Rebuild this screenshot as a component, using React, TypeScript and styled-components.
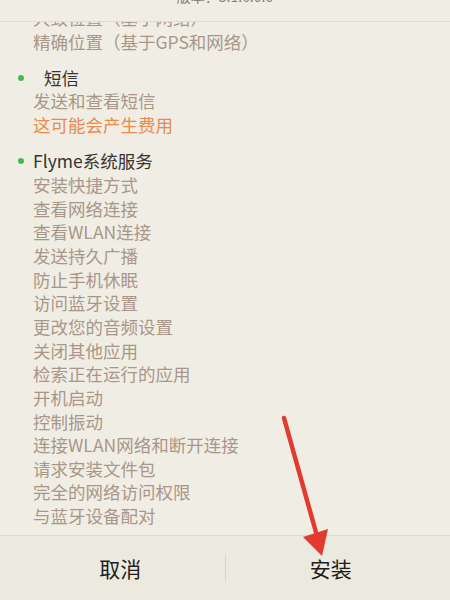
import React from 'react';
import styled, { createGlobalStyle } from 'styled-components';

const GlobalStyle = createGlobalStyle`
    html, body {
        margin: 0;
        padding: 0;
        background: #f0eee4;
        overflow: hidden;
    }
    * {
        box-sizing: border-box;
    }
`;

type Group = {
    title: string;
    indent?: boolean;
    items: string[];
    warning?: string;
};

const groups: Group[] = [
    {
        title: '',
        items: ['大致位置（基于网络）', '精确位置（基于GPS和网络）'],
    },
    {
        title: '短信',
        indent: true,
        items: ['发送和查看短信'],
        warning: '这可能会产生费用',
    },
    {
        title: 'Flyme系统服务',
        items: [
            '安装快捷方式',
            '查看网络连接',
            '查看WLAN连接',
            '发送持久广播',
            '防止手机休眠',
            '访问蓝牙设置',
            '更改您的音频设置',
            '关闭其他应用',
            '检索正在运行的应用',
            '开机启动',
            '控制振动',
            '连接WLAN网络和断开连接',
            '请求安装文件包',
            '完全的网络访问权限',
            '与蓝牙设备配对',
        ],
    },
];

const Page = styled.div`
    position: relative;
    width: 450px;
    height: 600px;
    display: flex;
    flex-direction: column;
    font-family: "Noto Sans CJK SC", "Noto Sans", sans-serif;
    background: #f0eee4;
`;

const Header = styled.div`
    height: 22px;
    flex: none;
    overflow: hidden;
    display: flex;
    justify-content: center;
    border-bottom: 1px solid #e2ddd2;
`;

const Version = styled.span`
    margin-top: -12px;
    font-size: 14px;
    line-height: 16px;
    color: #8a8078;
`;

const Scroller = styled.div`
    flex: 1;
    overflow: hidden;
`;

const List = styled.div`
    margin-top: -16px;
    padding-left: 33px;
    display: flex;
    flex-direction: column;
    gap: 12.5px;
`;

const Section = styled.div`
    display: flex;
    flex-direction: column;
`;

const Title = styled.div<{ $indent?: boolean }>`
    position: relative;
    padding-left: ${(props) => (props.$indent ? '11px' : '0')};
    font-size: 17.5px;
    line-height: 23.65px;
    color: #38332e;

    &::before {
        content: '';
        position: absolute;
        left: -15px;
        top: 9px;
        width: 6px;
        height: 6px;
        border-radius: 50%;
        background: #4cb648;
    }
`;

const Item = styled.div<{ $warn?: boolean }>`
    font-size: 17.5px;
    line-height: 23.65px;
    color: ${(props) => (props.$warn ? '#e98a4c' : '#a99689')};
    white-space: nowrap;
`;

const Footer = styled.div`
    height: 65px;
    flex: none;
    display: flex;
    align-items: center;
    background: #ece9df;
    border-top: 1px solid #e0d8cc;
`;

const Button = styled.button<{ $shift: number }>`
    flex: 1;
    height: 100%;
    border: none;
    background: transparent;
    font-family: "Noto Sans CJK SC", sans-serif;
    font-size: 21px;
    color: #1e1c1a;
    padding: 0;
    transform: translateX(${(props) => props.$shift}px);
`;

const Divider = styled.div`
    width: 1px;
    height: 26px;
    background: #dcd3c6;
`;

const Arrow = styled.svg`
    position: absolute;
    left: 0;
    top: 0;
    pointer-events: none;
`;

const App: React.FC = () => {
    return (
        <Page>
            <GlobalStyle />
            <Header>
                <Version>版本：5.1.6.0.0</Version>
            </Header>
            <Scroller>
                <List>
                    {groups.map((group, i) => (
                        <Section key={i}>
                            {group.title && <Title $indent={group.indent}>{group.title}</Title>}
                            {group.items.map((item) => (
                                <Item key={item}>{item}</Item>
                            ))}
                            {group.warning && <Item $warn>{group.warning}</Item>}
                        </Section>
                    ))}
                </List>
            </Scroller>
            <Footer>
                <Button $shift={8}>取消</Button>
                <Divider />
                <Button $shift={-7}>安装</Button>
            </Footer>
            <Arrow width="450" height="600" viewBox="0 0 450 600">
                <line x1="284" y1="418" x2="317" y2="536" stroke="#e03a31" strokeWidth="4.5" strokeLinecap="round" />
                <polygon points="303,537 328,529 322,556" fill="#e03a31" />
            </Arrow>
        </Page>
    );
};

export default App;
